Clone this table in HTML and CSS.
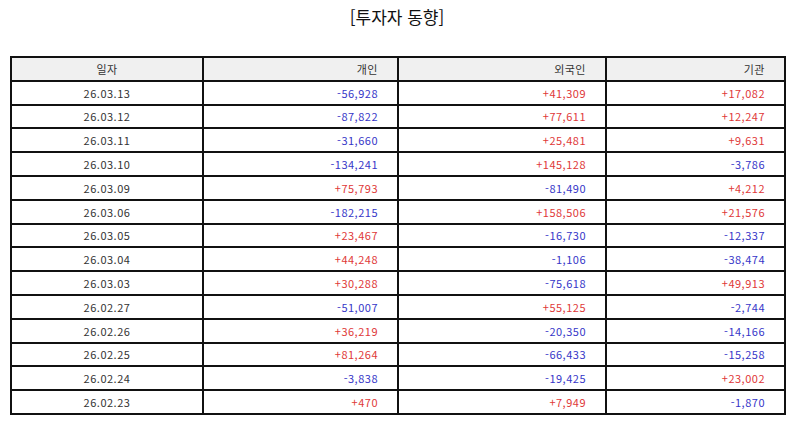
FILE: index.html
```html
<!DOCTYPE html>
<html lang="ko">
<head>
<meta charset="utf-8">
<link rel="stylesheet" href="styles.css">
</head>
<body>
<h1 class="title">[투자자 동향]</h1>
<table class="trend">
  <colgroup>
    <col class="c-date"><col class="c-ind"><col class="c-for"><col class="c-ins">
  </colgroup>
  <thead>
    <tr><th class="center">일자</th><th>개인</th><th>외국인</th><th>기관</th></tr>
  </thead>
  <tbody>
    <tr><td class="center">26.03.13</td><td class="neg">-56,928</td><td class="pos">+41,309</td><td class="pos">+17,082</td></tr>
    <tr><td class="center">26.03.12</td><td class="neg">-87,822</td><td class="pos">+77,611</td><td class="pos">+12,247</td></tr>
    <tr><td class="center">26.03.11</td><td class="neg">-31,660</td><td class="pos">+25,481</td><td class="pos">+9,631</td></tr>
    <tr><td class="center">26.03.10</td><td class="neg">-134,241</td><td class="pos">+145,128</td><td class="neg">-3,786</td></tr>
    <tr><td class="center">26.03.09</td><td class="pos">+75,793</td><td class="neg">-81,490</td><td class="pos">+4,212</td></tr>
    <tr><td class="center">26.03.06</td><td class="neg">-182,215</td><td class="pos">+158,506</td><td class="pos">+21,576</td></tr>
    <tr><td class="center">26.03.05</td><td class="pos">+23,467</td><td class="neg">-16,730</td><td class="neg">-12,337</td></tr>
    <tr><td class="center">26.03.04</td><td class="pos">+44,248</td><td class="neg">-1,106</td><td class="neg">-38,474</td></tr>
    <tr><td class="center">26.03.03</td><td class="pos">+30,288</td><td class="neg">-75,618</td><td class="pos">+49,913</td></tr>
    <tr><td class="center">26.02.27</td><td class="neg">-51,007</td><td class="pos">+55,125</td><td class="neg">-2,744</td></tr>
    <tr><td class="center">26.02.26</td><td class="pos">+36,219</td><td class="neg">-20,350</td><td class="neg">-14,166</td></tr>
    <tr><td class="center">26.02.25</td><td class="pos">+81,264</td><td class="neg">-66,433</td><td class="neg">-15,258</td></tr>
    <tr><td class="center">26.02.24</td><td class="neg">-3,838</td><td class="neg">-19,425</td><td class="pos">+23,002</td></tr>
    <tr><td class="center">26.02.23</td><td class="pos">+470</td><td class="pos">+7,949</td><td class="neg">-1,870</td></tr>
  </tbody>
</table>
</body>
</html>
```
FILE: styles.css
```css
html, body {
  margin: 0;
  padding: 0;
  background: #ffffff;
}
body {
  padding: 0 10px 0 10px;
  font-family: "Noto Sans CJK KR", "Noto Sans", sans-serif;
  color: #333333;
}
.title {
  margin: 0;
  padding-top: 5px;
  height: 56px;
  box-sizing: border-box;
  text-align: center;
  font-size: 17px;
  font-weight: normal;
  line-height: 24px;
  color: #111111;
}
.trend {
  width: 774px;
  border-collapse: collapse;
  table-layout: fixed;
  font-size: 11px;
  letter-spacing: 0.5px;
  border: 2px solid #111111;
}
.c-date { width: 192px; }
.c-ind { width: 195px; }
.c-for { width: 208px; }
.c-ins { width: 179px; }
.trend th, .trend td {
  border: 2px solid #111111;
  height: 21.8px;
  padding: 0 19px 0 0;
  text-align: right;
  font-weight: normal;
  line-height: 14px;
}
.trend th {
  background: #f0f0f0;
  color: #333333;
}
.trend .center {
  text-align: center;
  padding: 0;
}
.neg { color: #3636c8; }
.pos { color: #e03838; }
```
